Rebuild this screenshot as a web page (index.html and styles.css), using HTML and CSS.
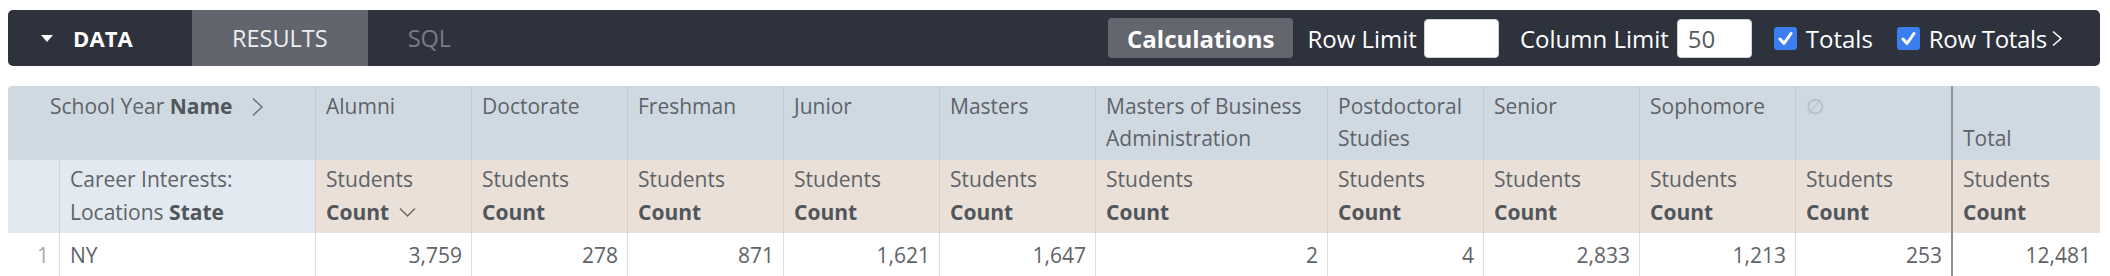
FILE: index.html
```html
<!DOCTYPE html>
<html>
<head>
<meta charset="utf-8">
<link rel="stylesheet" href="styles.css">
</head>
<body>
<div class="toolbar">
  <div class="tb-left">
    <div class="data-sec"><span class="tri"></span><span class="data-label">DATA</span></div>
    <div class="tab active">RESULTS</div>
    <div class="tab dim">SQL</div>
  </div>
  <div class="tb-right">
    <span class="calc">Calculations</span>
    <span class="lbl first">Row Limit</span><span class="inp"></span>
    <span class="lbl gap">Column Limit</span><span class="inp">50</span>
    <span class="cb"><svg width="23" height="23" viewBox="0 0 23 23"><path d="M6 12 L10 16.5 L17 6.5" fill="none" stroke="#fff" stroke-width="3" stroke-linecap="round" stroke-linejoin="round"/></svg></span><span class="lbl cbl">Totals</span>
    <span class="cb cb2"><svg width="23" height="23" viewBox="0 0 23 23"><path d="M6 12 L10 16.5 L17 6.5" fill="none" stroke="#fff" stroke-width="3" stroke-linecap="round" stroke-linejoin="round"/></svg></span><span class="lbl cbl rt">Row Totals</span>
    <svg class="chev" width="12" height="17" viewBox="0 0 12 17"><path d="M2 1.5 L10 8.5 L2 15.5" fill="none" stroke="#fff" stroke-width="1.6"/></svg>
  </div>
</div>

<table class="grid">
  <colgroup>
    <col class="c-num"><col class="c-dim">
    <col class="c-m"><col class="c-m"><col class="c-m"><col class="c-m"><col class="c-m">
    <col class="c-wide">
    <col class="c-m"><col class="c-m"><col class="c-m"><col class="c-m">
    <col class="c-tot">
  </colgroup>
  <tr class="r-pivot">
    <th colspan="2" class="pv-label">School Year <b>Name</b><svg class="hchev" width="13" height="20" viewBox="0 0 13 20"><path d="M2 1.5 L11 10 L2 18.5" fill="none" stroke="#6b7075" stroke-width="1.4"/></svg></th>
    <th>Alumni</th>
    <th>Doctorate</th>
    <th>Freshman</th>
    <th>Junior</th>
    <th>Masters</th>
    <th>Masters of Business Administration</th>
    <th>Postdoctoral Studies</th>
    <th>Senior</th>
    <th>Sophomore</th>
    <th class="null">&#8709;</th>
    <th class="tot bottom">Total</th>
  </tr>
  <tr class="r-hdr">
    <th class="numhdr"></th>
    <th class="dimhdr">Career Interests: Locations <b>State</b></th>
    <th class="meas">Students<br><b>Count</b><svg class="sort" width="17" height="10" viewBox="0 0 17 10"><path d="M1 1.5 L8.5 9 L16 1.5" fill="none" stroke="#6b6560" stroke-width="1.4"/></svg></th>
    <th class="meas">Students<br><b>Count</b></th>
    <th class="meas">Students<br><b>Count</b></th>
    <th class="meas">Students<br><b>Count</b></th>
    <th class="meas">Students<br><b>Count</b></th>
    <th class="meas">Students<br><b>Count</b></th>
    <th class="meas">Students<br><b>Count</b></th>
    <th class="meas">Students<br><b>Count</b></th>
    <th class="meas">Students<br><b>Count</b></th>
    <th class="meas">Students<br><b>Count</b></th>
    <th class="meas tot">Students<br><b>Count</b></th>
  </tr>
  <tr class="r-data">
    <td class="num">1</td>
    <td class="dimv">NY</td>
    <td>3,759</td>
    <td>278</td>
    <td>871</td>
    <td>1,621</td>
    <td>1,647</td>
    <td>2</td>
    <td>4</td>
    <td>2,833</td>
    <td>1,213</td>
    <td>253</td>
    <td class="tot">12,481</td>
  </tr>
</table>
</body>
</html>
```

FILE: styles.css
```css
* { box-sizing: border-box; }
html, body { background: #ffffff; }
body {
  margin: 10px 10px 0 8px;
  font-family: "Open Sans", "DejaVu Sans", sans-serif;
}

/* ---------- toolbar ---------- */
.toolbar {
  width: 2092px;
  height: 56px;
  background: #2e323d;
  border-radius: 5px;
  display: flex;
  justify-content: space-between;
  align-items: stretch;
  overflow: hidden;
  color: #ffffff;
  font-size: 24px;
}
.tb-left { display: flex; align-items: stretch; }
.data-sec {
  width: 184px;
  display: flex;
  align-items: center;
  padding-left: 33px;
}
.tri {
  width: 0; height: 0;
  border-left: 6px solid transparent;
  border-right: 6px solid transparent;
  border-top: 7px solid #ffffff;
  margin-right: 20px;
}
.data-label { font-weight: 700; font-size: 22px; letter-spacing: 0.1px; }
.tab {
  display: flex;
  align-items: center;
  padding: 0 40px;
  font-size: 23.5px;
  font-weight: 400;
}
.tab.active { background: #62656d; color: #eceef0; }
.tab.dim { color: #787b83; }

.tb-right {
  display: flex;
  align-items: center;
  padding-right: 37px;
}
.calc {
  background: #63666e;
  height: 40px;
  padding: 0 19px;
  border-radius: 4px;
  display: flex;
  align-items: center;
  font-weight: 700;
  font-size: 24px;
}
.lbl { font-size: 24px; color: #ffffff; }
.lbl.first { margin-left: 14px; margin-right: 7px; }
.lbl.gap { margin-left: 21px; margin-right: 8px; }
.lbl.rt { letter-spacing: -0.3px; }
.inp {
  width: 75px;
  height: 39px;
  background: #ffffff;
  border: 1px solid #cfd2d6;
  border-radius: 4px;
  color: #555a60;
  font-size: 24px;
  display: flex;
  align-items: center;
  padding-left: 10px;
}
.cb {
  width: 23px; height: 23px;
  background: #3b7ef0;
  border-radius: 3px;
  margin-left: 22px;
  display: flex;
}
.cb.cb2 { margin-left: 24px; }
.cbl { margin-left: 9px; }
.chev { margin-left: 4px; }

/* ---------- grid ---------- */
.grid {
  margin-top: 20px;
  width: 2092px;
  table-layout: fixed;
  border-collapse: separate;
  border-spacing: 0;
  font-size: 21px;
  line-height: 32px;
  color: #5f6368;
  border-radius: 4px 4px 0 0;
  overflow: hidden;
}
.c-num { width: 51px; }
.c-dim { width: 256px; }
.c-m { width: 156px; }
.c-wide { width: 232px; }
.c-tot { width: 149px; }

.grid th, .grid td { font-weight: 400; text-align: left; }
.grid b { font-weight: 700; color: #51565b; }

.r-pivot th {
  background: #cfd9e2;
  height: 73px;
  vertical-align: top;
  padding: 4px 10px 6px 10px;
  border-left: 1px solid #bfcbd6;
}
.r-pivot th.pv-label { border-left: none; padding-left: 42px; }
.r-pivot th.null { color: #b3bcc5; }
.r-pivot th.bottom { vertical-align: bottom; }
.hchev { vertical-align: -3px; margin-left: 18px; }

.r-hdr th {
  height: 73px;
  vertical-align: top;
  line-height: 33px;
  padding: 3px 10px 3px 10px;
}
.r-hdr th.numhdr { background: #e2e9f0; padding: 0; }
.r-hdr th.dimhdr { background: #e2e9f0; border-left: 1px solid #cdd6df; }
.r-hdr th.meas { background: #eae0d7; border-left: 1px solid #d9cdc2; }
.sort { vertical-align: 3px; margin-left: 10px; }

.r-data td {
  height: 44px;
  padding: 6px 9px 6px 10px;
  text-align: right;
  border-left: 1px solid #dedede;
  vertical-align: top;
}
.r-data td.num {
  border-left: none;
  text-align: right;
  padding-right: 10px;
  color: #a8abae;
}
.r-data td.dimv { text-align: left; }

.grid .tot { border-left: 2px solid #8d8f92 !important; }
```
